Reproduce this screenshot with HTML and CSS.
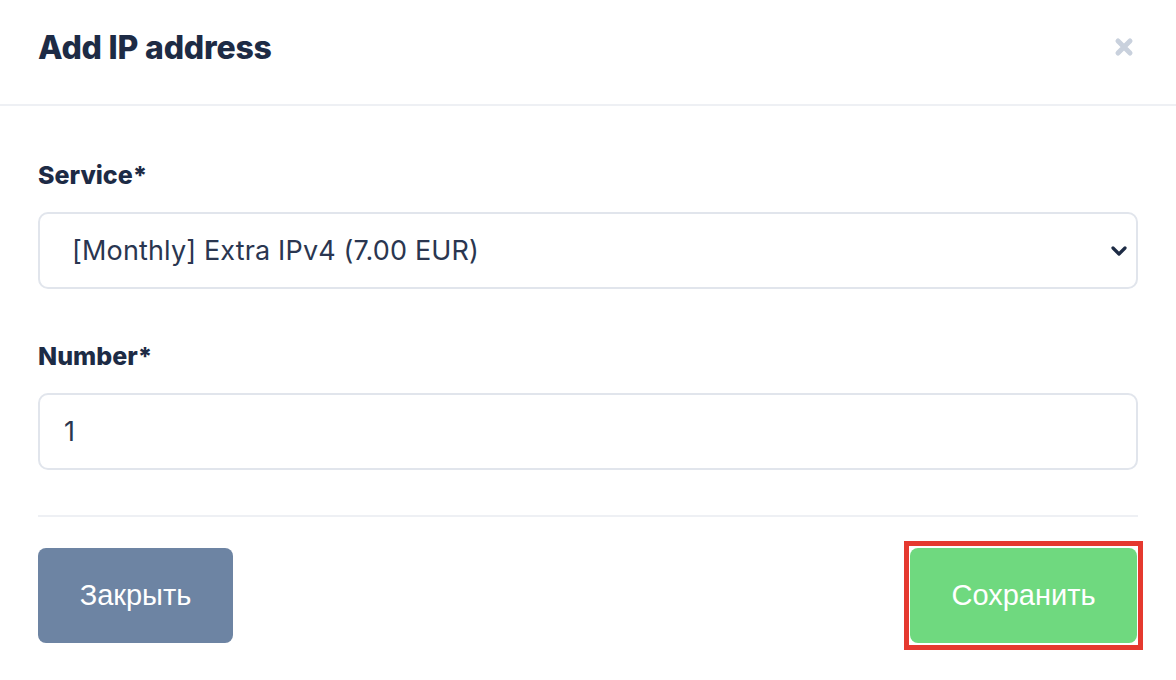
FILE: index.html
```html
<!DOCTYPE html>
<html lang="ru">
<head>
  <meta charset="UTF-8">
  <meta name="viewport" content="width=device-width, initial-scale=1.0">
  <title>Add IP address</title>
  <link rel="stylesheet" href="styles.css">
</head>
<body>
  <div class="modal">
    <div class="modal-header">
      <h2>Add IP address</h2>
      <button type="button" class="modal-close" aria-label="Close">
        <svg width="22" height="22" viewBox="0 0 22 22">
          <path d="M5 5 L17 17 M17 5 L5 17" stroke="#c9d1dd" stroke-width="5" stroke-linecap="round" fill="none"/>
        </svg>
      </button>
    </div>

    <form class="modal-body" id="ipForm">
      <div class="form-group">
        <label for="service">Service*</label>
        <div class="select-wrap">
          <select id="service" name="service">
            <option>[Monthly] Extra IPv4 (7.00 EUR)</option>
          </select>
          <svg class="select-arrow" width="18" height="12" viewBox="0 0 18 12">
            <path d="M3 3 L9 9 L15 3" stroke="#1d2b45" stroke-width="3.2" stroke-linecap="round" stroke-linejoin="round" fill="none"/>
          </svg>
        </div>
      </div>

      <div class="form-group">
        <label for="number">Number*</label>
        <input type="text" id="number" name="number" value="1">
      </div>

      <div class="form-actions">
        <button type="button" class="btn btn-close">Закрыть</button>
        <div class="highlight">
          <button type="submit" class="btn btn-save">Сохранить</button>
        </div>
      </div>
    </form>
  </div>
</body>
</html>
```

FILE: styles.css
```css
body {
  margin: 0;
  font-family: Inter, "Noto Sans", sans-serif;
  background-color: #ffffff;
  color: #1d2b45;
}

.modal {
  width: 100%;
}

.modal-header {
  display: flex;
  align-items: center;
  justify-content: space-between;
  height: 104px;
  padding: 0 38px;
  border-bottom: 2px solid #eef0f4;
}

.modal-header h2 {
  margin: 0 0 10px;
  font-size: 32px;
  font-weight: 800;
  letter-spacing: -0.2px;
  color: #1d2b45;
}

.modal-close {
  display: flex;
  padding: 0;
  margin: 0 3px 10px 0;
  background: none;
  border: none;
  cursor: pointer;
}

.modal-body {
  padding: 54px 38px 0;
}

.form-group {
  margin-bottom: 52px;
}

.form-group label {
  display: block;
  margin-bottom: 22px;
  font-size: 25px;
  line-height: 30px;
  font-weight: 800;
  color: #1d2b45;
}

.select-wrap {
  position: relative;
}

.form-group select,
.form-group input {
  display: block;
  box-sizing: border-box;
  width: 100%;
  height: 77px;
  margin: 0;
  font-family: Inter, "Noto Sans", sans-serif;
  font-size: 27px;
  letter-spacing: 0.15px;
  color: #2a3650;
  background-color: #ffffff;
  border: 2px solid #e1e5ec;
  border-radius: 10px;
  outline: none;
}

.form-group select {
  appearance: none;
  padding: 0 60px 0 32px;
}

.form-group input {
  padding: 0 24px;
}

.select-arrow {
  position: absolute;
  right: 10px;
  top: 50%;
  margin-top: -6px;
  pointer-events: none;
}

.form-actions {
  display: flex;
  align-items: center;
  justify-content: space-between;
  margin-top: -7px;
  padding-top: 24px;
  border-top: 2px solid #eef0f4;
}

.btn {
  display: block;
  height: 95px;
  padding: 0;
  font-family: "Liberation Sans", Arial, sans-serif;
  font-size: 29px;
  color: #ffffff;
  border: none;
  border-radius: 8px;
  cursor: pointer;
}

.btn-close {
  width: 195px;
  background-color: #6d84a3;
}

.highlight {
  margin-right: -5px;
  padding: 2px 1px;
  border: 5px solid #e5392f;
}

.btn-save {
  width: 227px;
  background-color: #6fd97f;
}
```
